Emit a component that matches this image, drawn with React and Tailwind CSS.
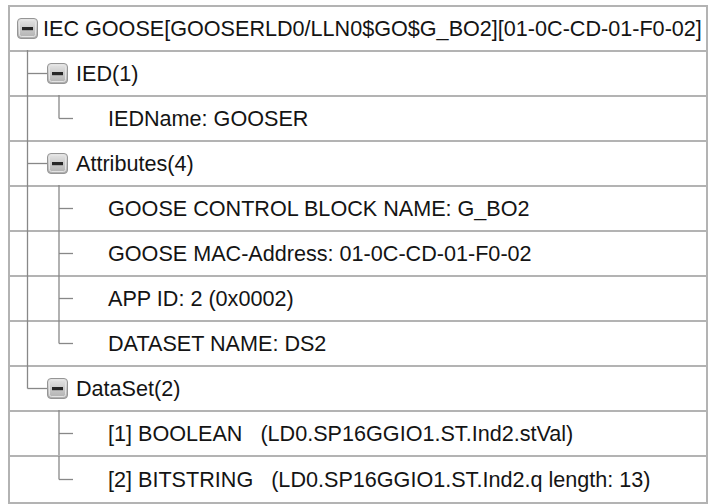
import React from "react";

const LINE = "#888888";

function MinusBox({ x }) {
  return (
    <g>
      <rect x={x + 0.5} y={11.5} width={20} height={20} rx={3.5} fill="url(#boxg)" stroke="#959595" strokeWidth={1} />
      <rect x={x + 2.5} y={13.5} width={16} height={16} rx={2} fill="none" stroke="#e4e4e4" strokeWidth={1} />
      <rect x={x + 5} y={20} width={11} height={3.2} fill="#262626" />
    </g>
  );
}

function Guides({ type, last, parentLast }) {
  const H = 43;
  const c = 21.5;
  return (
    <svg width={type === "root" ? 33 : type === "l1" ? 66 : 98} height={H} className="shrink-0 overflow-visible">
      <defs>
        <linearGradient id="boxg" x1="0" y1="0" x2="0" y2="1">
          <stop offset="0" stopColor="#e6e6e6" />
          <stop offset="1" stopColor="#aeaeae" />
        </linearGradient>
      </defs>
      {type === "root" && <MinusBox x={7} />}
      {type === "l1" && (
        <g>
          <line x1={17.5} y1={-2} x2={17.5} y2={last ? c : H} stroke={LINE} strokeWidth={1.3} />
          <line x1={17.5} y1={c} x2={37} y2={c} stroke={LINE} strokeWidth={1.3} />
          <MinusBox x={37} />
        </g>
      )}
      {type === "leaf" && (
        <g>
          {!parentLast && <line x1={17.5} y1={-2} x2={17.5} y2={H} stroke={LINE} strokeWidth={1.3} />}
          <line x1={49} y1={-2} x2={49} y2={last ? c : H} stroke={LINE} strokeWidth={1.3} />
          <line x1={49} y1={c} x2={63} y2={c} stroke={LINE} strokeWidth={1.3} />
        </g>
      )}
    </svg>
  );
}

function Row({ type, last, parentLast, text, isLastRow }) {
  return (
    <div className={`flex h-[45px] items-center ${isLastRow ? "" : "border-b-2 border-[#b3b3b3]"}`}>
      <Guides type={type} last={last} parentLast={parentLast} />
      <span className="whitespace-pre text-[21.6px] leading-none text-[#141414]">{text}</span>
    </div>
  );
}

export default function App() {
  const rows = [
    { type: "root", text: "IEC GOOSE[GOOSERLD0/LLN0$GO$G_BO2][01-0C-CD-01-F0-02]" },
    { type: "l1", text: "IED(1)" },
    { type: "leaf", last: true, text: "IEDName: GOOSER" },
    { type: "l1", text: "Attributes(4)" },
    { type: "leaf", text: "GOOSE CONTROL BLOCK NAME: G_BO2" },
    { type: "leaf", text: "GOOSE MAC-Address: 01-0C-CD-01-F0-02" },
    { type: "leaf", text: "APP ID: 2 (0x0002)" },
    { type: "leaf", last: true, text: "DATASET NAME: DS2" },
    { type: "l1", last: true, text: "DataSet(2)" },
    { type: "leaf", parentLast: true, text: "[1] BOOLEAN   (LD0.SP16GGIO1.ST.Ind2.stVal)" },
    { type: "leaf", parentLast: true, last: true, text: "[2] BITSTRING   (LD0.SP16GGIO1.ST.Ind2.q length: 13)" },
  ];
  return (
    <div className="h-[504px] w-[712px] bg-white pl-[8px] pt-[5px]" style={{ fontFamily: '"Liberation Sans", Arial, sans-serif' }}>
      <div className="flex w-[700px] flex-col border-2 border-[#b3b3b3] bg-white">
        {rows.map((r, i) => (
          <Row key={i} {...r} isLastRow={i === rows.length - 1} />
        ))}
      </div>
    </div>
  );
}
